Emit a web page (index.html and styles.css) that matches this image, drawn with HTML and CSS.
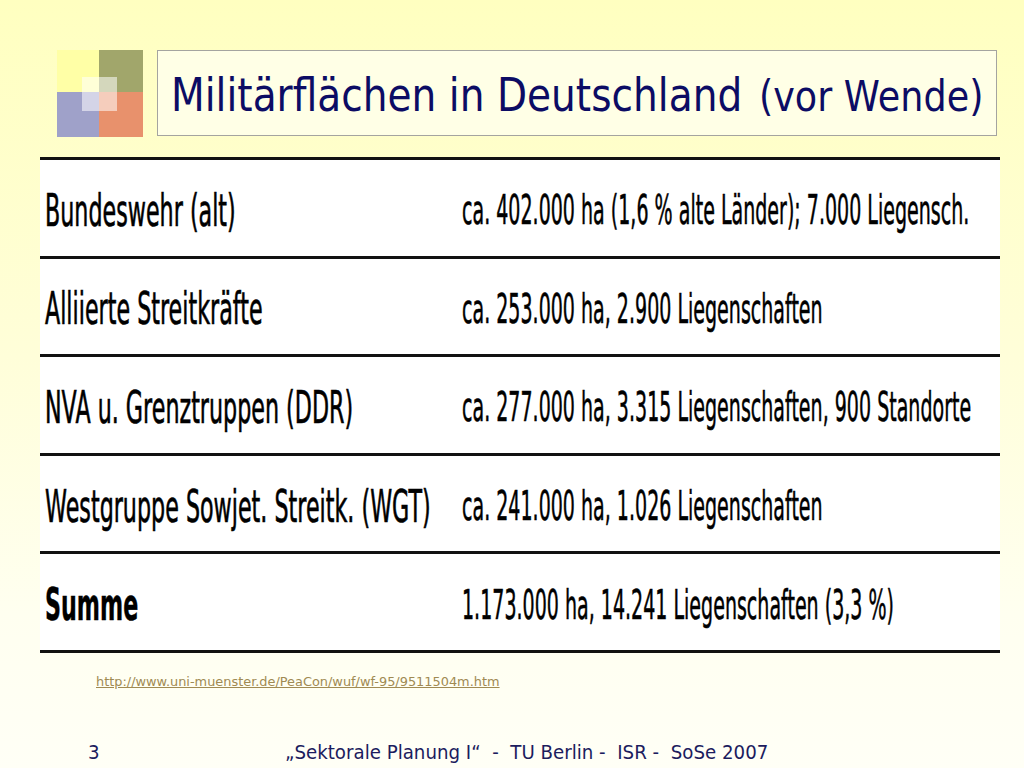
FILE: index.html
```html
<!DOCTYPE html>
<html lang="de">
<head>
<meta charset="utf-8">
<title>Militärflächen in Deutschland</title>
<link rel="stylesheet" href="styles.css">
</head>
<body>
<div class="slide">
  <header class="head">
    <div class="logo">
      <div class="q q-yellow"></div>
      <div class="q q-green"></div>
      <div class="q q-blue"></div>
      <div class="q q-orange"></div>
      <div class="logo-center"></div>
    </div>
    <div class="titlebox">
      <h1 class="title"><span class="sq-title">Militärflächen in Deutschland <span class="sub">(vor Wende)</span></span></h1>
    </div>
  </header>

  <table class="data">
    <colgroup>
      <col class="col1">
      <col class="col2">
    </colgroup>
    <tr>
      <td class="c1"><span class="sq-l">Bundeswehr (alt)</span></td>
      <td class="c2"><span class="sq-r">ca. 402.000 ha (1,6 % alte Länder); 7.000 Liegensch.</span></td>
    </tr>
    <tr>
      <td class="c1"><span class="sq-l">Alliierte Streitkräfte</span></td>
      <td class="c2"><span class="sq-r">ca. 253.000 ha, 2.900 Liegenschaften</span></td>
    </tr>
    <tr>
      <td class="c1"><span class="sq-l">NVA u. Grenztruppen (DDR)</span></td>
      <td class="c2"><span class="sq-r">ca. 277.000 ha, 3.315 Liegenschaften, 900 Standorte</span></td>
    </tr>
    <tr>
      <td class="c1"><span class="sq-l">Westgruppe Sowjet. Streitk. (WGT)</span></td>
      <td class="c2"><span class="sq-r">ca. 241.000 ha, 1.026 Liegenschaften</span></td>
    </tr>
    <tr class="sum">
      <td class="c1"><span class="sq-l sq-bold">Summe</span></td>
      <td class="c2"><span class="sq-r">1.173.000 ha, 14.241 Liegenschaften (3,3 %)</span></td>
    </tr>
  </table>

  <p class="source"><a href="#">http://www.uni-muenster.de/PeaCon/wuf/wf-95/9511504m.htm</a></p>

  <footer class="foot">
    <span class="num"><span class="sq-foot">3</span></span>
    <span class="ftext"><span class="sq-foot">„Sektorale Planung I“&nbsp; -&nbsp; TU Berlin -&nbsp; ISR -&nbsp; SoSe 2007</span></span>
  </footer>
</div>
</body>
</html>
```

FILE: styles.css
```css
html, body {
  margin: 0;
  padding: 0;
}
body {
  width: 1024px;
  height: 768px;
  overflow: hidden;
  font-family: "DejaVu Sans", Verdana, sans-serif;
}
.slide {
  width: 1024px;
  height: 768px;
  box-sizing: border-box;
  padding-top: 50px;
  background: linear-gradient(to bottom, #ffffc0 0%, #fffed8 45%, #fffff0 80%, #fffff6 100%);
  display: flex;
  flex-direction: column;
  overflow: hidden;
}

/* header */
.head {
  display: flex;
  align-items: flex-start;
  gap: 14px;
  margin-left: 57px;
}
.logo {
  position: relative;
  width: 86px;
  height: 87px;
  flex: none;
  display: grid;
  grid-template-columns: 42px 44px;
  grid-template-rows: 42px 45px;
}
.q-yellow { background: #ffffa6; }
.q-green  { background: #a1a66b; }
.q-blue   { background: #9fa1c9; }
.q-orange { background: #e8916c; }
.logo-center {
  position: absolute;
  left: 25px;
  top: 27px;
  width: 35px;
  height: 34px;
  background: rgba(255, 255, 255, 0.55);
}
.titlebox {
  width: 840px;
  height: 86px;
  flex: none;
  box-sizing: border-box;
  border: 1px solid #a4a4a0;
  background: #ffffe6;
  display: flex;
  align-items: center;
  padding-left: 13px;
  overflow: hidden;
}
.title {
  margin: 0;
  min-width: 0;
  flex: 1;
  overflow: hidden;
  font-weight: normal;
  font-size: 46px;
  line-height: 1.1;
  color: #0c0c64;
  white-space: nowrap;
}
.sq-title {
  display: inline-block;
  transform: scaleX(0.85);
  transform-origin: left center;
  padding-top: 4px;
}
.sub {
  font-size: 43px;
  margin-left: 5px;
}

/* table */
.data {
  margin: 20px 0 0 40px;
  width: 960px;
  table-layout: fixed;
  border-collapse: collapse;
  background: #ffffff;
  border-top: 3px solid #111;
}
.col1 { width: 422px; }
.col2 { width: 538px; }
.data tr {
  height: 98.6px;
  border-bottom: 3px solid #111;
}
.data td {
  padding: 5px 0 0 0;
  vertical-align: middle;
  white-space: nowrap;
  overflow: hidden;
  color: #000;
}
.c1 {
  padding-left: 5px !important;
}
.sq-l {
  display: inline-block;
  font-size: 44px;
  transform: scaleX(0.505);
  transform-origin: left center;
  -webkit-text-stroke: 0.7px #000;
}
.sq-bold {
  font-weight: bold;
  transform: scaleX(0.505);
  -webkit-text-stroke: 0.5px #000;
}
.sq-r {
  display: inline-block;
  font-size: 40px;
  transform: scaleX(0.476);
  transform-origin: left center;
  -webkit-text-stroke: 0.6px #000;
}

/* source link */
.source {
  margin: 21px 0 0 96px;
  font-size: 12.9px;
  line-height: 15px;
}
.source a {
  color: #a08a52;
  text-decoration: underline;
}

/* footer */
.foot {
  margin-top: auto;
  height: 32px;
  display: flex;
  align-items: center;
  color: #1c1c5e;
  font-size: 20px;
}
.num {
  width: 197px;
  padding-left: 88px;
  flex: none;
}
.ftext {
  min-width: 0;
  overflow: hidden;
  flex: 1;
}
.sq-foot {
  display: inline-block;
  transform: scaleX(0.91);
  transform-origin: left center;
  white-space: nowrap;
}
```
